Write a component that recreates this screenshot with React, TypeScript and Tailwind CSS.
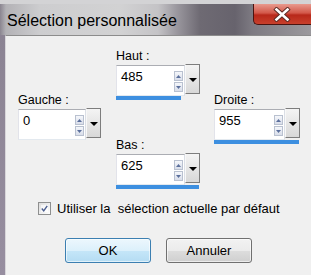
import React from "react";

function Spinner() {
  return (
    <div className="flex flex-col w-[9px] mt-[5px] mr-[1px] gap-[1px]">
      <div className="h-[10px] border border-[#b9c1d0] bg-[linear-gradient(#f5f7fb,#d9deea)] flex items-center justify-center">
        <svg width="5" height="3" viewBox="0 0 5 3">
          <path d="M0 3 L2.5 0 L5 3 Z" fill="#5b6f9c" />
        </svg>
      </div>
      <div className="h-[10px] border border-[#b9c1d0] bg-[linear-gradient(#f5f7fb,#d9deea)] flex items-center justify-center">
        <svg width="5" height="3" viewBox="0 0 5 3">
          <path d="M0 0 L2.5 3 L5 0 Z" fill="#5b6f9c" />
        </svg>
      </div>
    </div>
  );
}

function Dropdown() {
  return (
    <div className="w-[15px] h-[30px] -mt-[1px] border border-[#7d7d7d] border-l-[#f8f8f8] bg-[linear-gradient(#f4f4f4,#d8d8d8)] flex justify-center pt-[13px]">
      <svg width="8" height="4" viewBox="0 0 8 4">
        <path d="M0 0 L8 0 L4 4 Z" fill="#000" />
      </svg>
    </div>
  );
}

function Field({
  label,
  value,
  width,
  bar,
}: {
  label: string;
  value: string;
  width: string;
  bar: string;
}) {
  return (
    <div className={"flex flex-col " + width}>
      <div className="h-[14px] leading-[14px] text-[12.5px] mb-[2px] text-black">{label}</div>
      <div className="flex h-[31px]">
        <div className="flex-1 flex bg-white border border-[#abadb3] border-b-[#e3e9ef] border-l-[#e2e3ea] border-r-[#dbdfe6]">
          <div className="flex-1 pl-[4px] pt-[4px] leading-[14px] text-[13px] text-black">{value}</div>
          <Spinner />
        </div>
        <Dropdown />
      </div>
      <div className="h-[4px]">
        <div className={"h-full bg-[#3d8fe0] " + bar} />
      </div>
    </div>
  );
}

export default function App() {
  return (
    <div className="w-[311px] h-[275px] overflow-hidden flex flex-col bg-[#8f8696] font-['Liberation_Sans',Arial,sans-serif]">
      {/* Title bar */}
      <div className="h-[35px] flex flex-col bg-[linear-gradient(to_right,#8a8590_0px,#b3b2b6_6px,#cdcdcf_40px,#d2d2d3_120px,#c4c3c6_158px,#9c99a0_176px,#6e6a73_200px,#67636d_235px,#7d7a82_252px,#9b999d_311px)]">
        <div className="h-[4px] bg-[#d3d3d5]" />
        <div className="flex-1 flex items-start">
          <div className="mt-[8px] ml-[7px] text-[16px] leading-[18px] text-black">Sélection personnalisée</div>
          <div className="ml-auto w-[58px] h-[21px] rounded-bl-[5px] border border-[#4a1410] border-t-0 border-r-0 bg-[linear-gradient(#e89a8e,#d3584a_45%,#b8281a_55%,#c8402c)] flex items-center justify-center pr-[1px]">
            <svg width="18" height="15" viewBox="0 0 18 15">
              <path d="M3.5 2.5 L14.5 12.5 M14.5 2.5 L3.5 12.5" stroke="#5a2a24" strokeWidth="4.4" strokeLinecap="square" />
              <path d="M3.5 2.5 L14.5 12.5 M14.5 2.5 L3.5 12.5" stroke="#ffffff" strokeWidth="2.6" strokeLinecap="square" />
            </svg>
          </div>
        </div>
      </div>
      {/* Body */}
      <div className="flex-1 flex">
        <div className="w-[5px] bg-[linear-gradient(#8b8393,#978ea0)]" />
        <div className="flex-1 flex flex-col bg-[#f0f0f0] border-t border-t-[#8c8c8c] border-l border-l-[#d8d6da]">
          <div className="flex pl-[12px] gap-[15px]">
            <div className="pt-[57px]">
              <Field label="Gauche :" value="0" width="w-[83px]" bar="w-0" />
            </div>
            <div className="pt-[13px] flex flex-col gap-[38px]">
              <Field label="Haut :" value="485" width="w-[84px]" bar="w-[65px]" />
              <Field label="Bas :" value="625" width="w-[84px]" bar="w-[83px]" />
            </div>
            <div className="pt-[57px] -ml-[1px]">
              <Field label="Droite :" value="955" width="w-[86px]" bar="w-[85px]" />
            </div>
          </div>
          <div className="flex items-center h-[15px] mt-[12px] pl-[32px]">
            <div className="w-[13px] h-[13px] border border-[#8e8f8f] bg-[linear-gradient(135deg,#dcdcdc,#ffffff)] p-[2px]">
              <div className="w-full h-full bg-[linear-gradient(135deg,#f4f4f4,#ffffff)] flex items-center justify-center">
                <svg width="9" height="9" viewBox="0 0 9 9">
                  <path d="M1 4.5 L3.5 7.5 L8 1" stroke="#4a5d8f" strokeWidth="1.8" fill="none" />
                </svg>
              </div>
            </div>
            <div className="ml-[6px] text-[13px] leading-[15px] text-black whitespace-pre">Utiliser la  sélection actuelle par défaut</div>
          </div>
          <div className="flex gap-[15px] mt-[22px] pl-[59px]">
            <div className="w-[86px] h-[25px] rounded-[3px] border border-[#3c7fb1] bg-[linear-gradient(#ecf7fd,#dcf0fb_50%,#c5e6f8_51%,#b4dcf3)] flex items-center justify-center text-[13px] text-black shadow-[inset_0_0_0_1px_rgba(255,255,255,0.6)]">
              OK
            </div>
            <div className="w-[86px] h-[25px] rounded-[3px] border border-[#707070] bg-[linear-gradient(#f2f2f2,#ebebeb_50%,#dddddd_51%,#cfcfcf)] flex items-center justify-center text-[13px] text-black shadow-[inset_0_0_0_1px_rgba(255,255,255,0.6)]">
              Annuler
            </div>
          </div>
        </div>
      </div>
    </div>
  );
}
